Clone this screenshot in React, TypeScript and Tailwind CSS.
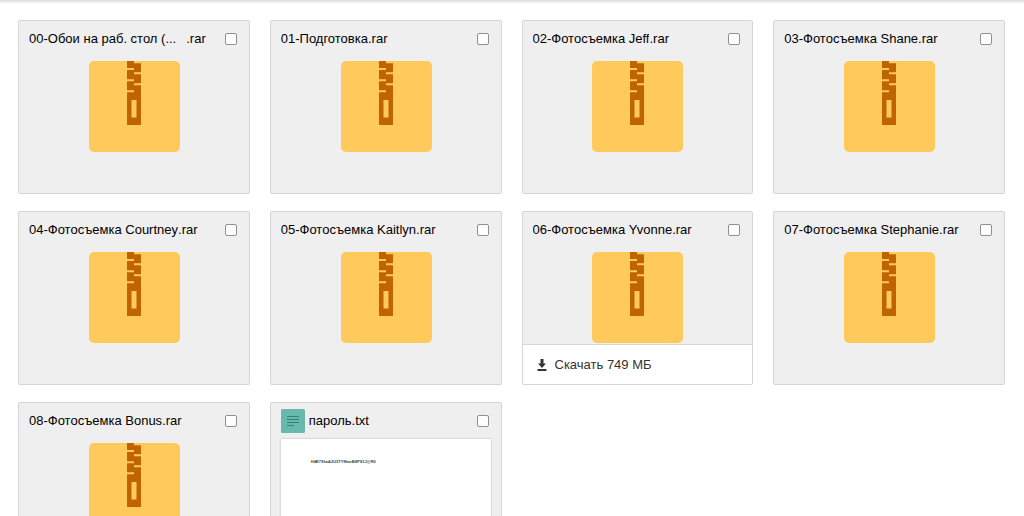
import { useState } from 'react';

type FileItem = {
  id: string;
  name: string;
  ext: string;
  type: 'archive' | 'text';
  size?: string;
  preview?: string;
  shortened?: boolean;
};

const files: FileItem[] = [
  { id: '00', name: '00-Обои на раб. стол (...', ext: '.rar', type: 'archive', shortened: true },
  { id: '01', name: '01-Подготовка', ext: '.rar', type: 'archive' },
  { id: '02', name: '02-Фотосъемка Jeff', ext: '.rar', type: 'archive' },
  { id: '03', name: '03-Фотосъемка Shane', ext: '.rar', type: 'archive' },
  { id: '04', name: '04-Фотосъемка Courtney', ext: '.rar', type: 'archive' },
  { id: '05', name: '05-Фотосъемка Kaitlyn', ext: '.rar', type: 'archive' },
  { id: '06', name: '06-Фотосъемка Yvonne', ext: '.rar', type: 'archive', size: '749 МБ' },
  { id: '07', name: '07-Фотосъемка Stephanie', ext: '.rar', type: 'archive' },
  { id: '08', name: '08-Фотосъемка Bonus', ext: '.rar', type: 'archive' },
  { id: 'pass', name: 'пароль', ext: '.txt', type: 'text', preview: 'H4B7SfwA2U3TYMwzB8PS1J@R0' },
];

function ArchiveIcon() {
  return (
    <svg width="91" height="91" viewBox="0 0 91 91" className="mt-1 ml-px shrink-0 self-center" aria-hidden="true">
      <rect width="91" height="91" rx="5" fill="#ffc95c" />
      {/* zipper */}
      <path
        fill="#c06400"
        fillRule="evenodd"
        d="M38 0h7v2.3h7v9h-7v2h7v9h-7v2h7V64H38V31.3h7v-2h-7v-9h7v-2h-7V9h7V7h-7zM42.5 39v17.5h5V39z"
      />
    </svg>
  );
}

function TextIcon() {
  return (
    <svg width="24" height="24" viewBox="0 0 24 24" className="mr-1 shrink-0" aria-hidden="true">
      <rect width="24" height="24" rx="1.5" fill="#68b8ad" />
      <path d="M6 7.5h12M6 10.5h12M6 13.5h12M6 16.5h7" stroke="#2b8475" strokeWidth="1.2" />
    </svg>
  );
}

function DownloadIcon() {
  return (
    <svg width="10" height="12" viewBox="0 0 10 12" fill="#333" aria-hidden="true">
      <path d="M3.5 0h3v4.5H9L5 9 1 4.5h2.5zM0.5 10h9v2h-9z" />
    </svg>
  );
}

function FileCard({ file }: { file: FileItem }) {
  const [checked, setChecked] = useState(false);

  return (
    <li className="flex h-[174px] flex-col overflow-hidden rounded-xs border border-[#d5d5d5] bg-[#efefef]">
      <div className="flex h-9 shrink-0 items-center pr-3 pl-2.5">
        {file.type === 'text' && <TextIcon />}
        <label htmlFor={`file-${file.id}`} className="flex min-w-0 flex-1 whitespace-nowrap">
          <span className="truncate">{file.name}</span>
          <span className={file.shortened ? 'ml-2.5' : ''}>{file.ext}</span>
        </label>
        <input
          id={`file-${file.id}`}
          type="checkbox"
          checked={checked}
          onChange={() => setChecked(!checked)}
          className="ml-2 size-3 shrink-0 appearance-none rounded-xs border border-[#8f8f94] bg-white checked:bg-[#555]"
        />
      </div>

      {file.type === 'archive' && <ArchiveIcon />}

      {file.preview && (
        <div className="mx-2.5 flex-1 bg-white px-[30px] pt-5 shadow-[0_0_2px_rgba(0,0,0,0.25)]">
          <p className="text-[4px] leading-[6px] font-bold text-[#444]">{file.preview}</p>
        </div>
      )}

      {file.size && (
        <button
          type="button"
          className="mt-auto flex h-10 w-full shrink-0 items-center gap-2 border-t border-[#d5d5d5] bg-white px-3.5 text-[#333]"
        >
          <DownloadIcon />
          <span>Скачать {file.size}</span>
        </button>
      )}
    </li>
  );
}

export default function App() {
  return (
    <main className="h-screen overflow-hidden bg-white font-['Liberation_Sans',Arial,sans-serif] text-[13px] leading-4 text-black">
      {/* shadow of the toolbar above the list */}
      <div className="h-1 bg-linear-to-b from-[#dcdcdc] to-white"></div>
      <ul className="grid grid-cols-4 gap-x-5 gap-y-[17px] pt-4 pr-[19px] pl-[18px]">
        {files.map((file) => (
          <FileCard key={file.id} file={file} />
        ))}
      </ul>
    </main>
  );
}
